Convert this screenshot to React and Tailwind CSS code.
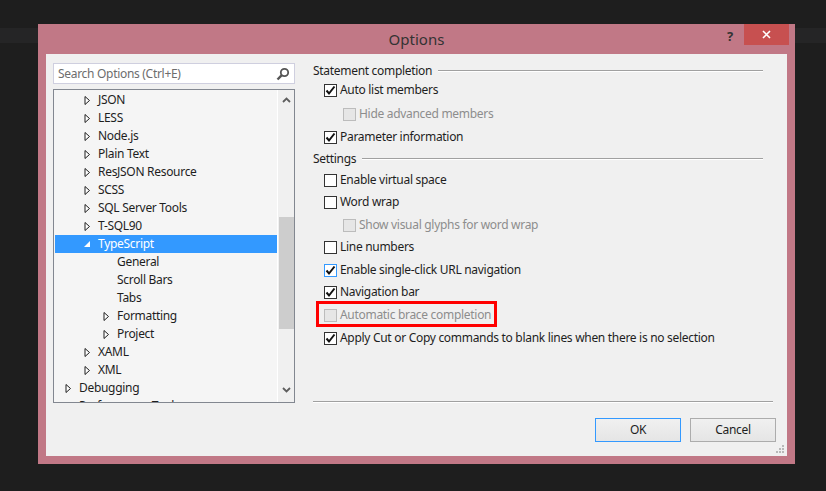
import React from "react";

const font = "font-['Noto_Sans',sans-serif] tracking-[-0.3px]";

const Arrow = ({ open, selected }) =>
  open ? (
    <svg width="7" height="8" viewBox="0 0 7 8" className="shrink-0">
      <path d="M6 1 L6 7 L0 7 Z" fill={selected ? "#ffffff" : "#1e1e1e"} />
    </svg>
  ) : (
    <svg width="7" height="9" viewBox="0 0 7 9" className="shrink-0">
      <path d="M1 0.5 L5.5 4.5 L1 8.5 Z" fill="#ffffff" stroke="#1e1e1e" strokeWidth="1" />
    </svg>
  );

const treeItems = [
  { label: "JSON", level: 1, arrow: "closed" },
  { label: "LESS", level: 1, arrow: "closed" },
  { label: "Node.js", level: 1, arrow: "closed" },
  { label: "Plain Text", level: 1, arrow: "closed" },
  { label: "ResJSON Resource", level: 1, arrow: "closed" },
  { label: "SCSS", level: 1, arrow: "closed" },
  { label: "SQL Server Tools", level: 1, arrow: "closed" },
  { label: "T-SQL90", level: 1, arrow: "closed" },
  { label: "TypeScript", level: 1, arrow: "open", selected: true },
  { label: "General", level: 2 },
  { label: "Scroll Bars", level: 2 },
  { label: "Tabs", level: 2 },
  { label: "Formatting", level: 2, arrow: "closed" },
  { label: "Project", level: 2, arrow: "closed" },
  { label: "XAML", level: 1, arrow: "closed" },
  { label: "XML", level: 1, arrow: "closed" },
  { label: "Debugging", level: 0, arrow: "closed" },
  { label: "Performance Tools", level: 0, arrow: "closed" },
];

const indent = ["pl-[10px]", "pl-[29px]", "pl-[48px]"];

const TreeRow = ({ item }) => (
  <div
    className={`h-[18px] shrink-0 flex items-center ${indent[item.level]} ${
      item.selected ? "bg-[#3399ff] text-white" : "text-[#1e1e1e]"
    }`}
  >
    <div className="w-[14px] flex items-center">
      {item.arrow && <Arrow open={item.arrow === "open"} selected={item.selected} />}
    </div>
    <span className="whitespace-nowrap">{item.label}</span>
  </div>
);

const Check = ({ checked, disabled, focused }) => (
  <div
    className={`w-[13px] h-[13px] shrink-0 border flex items-center justify-center ${
      disabled
        ? "bg-[#e6e6e6] border-[#bcbcbc]"
        : focused
        ? "bg-white border-[#3399ff]"
        : "bg-white border-[#333333]"
    }`}
  >
    {checked && (
      <svg width="11" height="11" viewBox="0 0 11 11">
        <path d="M1.5 5.5 L4 8.5 L9.5 1.5" fill="none" stroke="#111" strokeWidth="2" />
      </svg>
    )}
  </div>
);

const Option = ({ label, checked, disabled, focused, sub, mt = "" }) => (
  <div className={`h-[22px] flex items-center ${sub ? "pl-[30px]" : "pl-[11px]"} ${mt}`}>
    <Check checked={checked} disabled={disabled} focused={focused} />
    <span className={`ml-[3px] whitespace-nowrap ${disabled ? "text-[#8d8d8d]" : "text-[#1e1e1e]"}`}>
      {label}
    </span>
  </div>
);

const Group = ({ title, mt = "" }) => (
  <div className={`h-[16px] flex items-center pr-[10px] ${mt}`}>
    <span className="whitespace-nowrap text-[#1e1e1e]">{title}</span>
    <div className="flex-1 ml-[6px] h-[2px] border-t border-[#a0a0a0] border-b border-b-white" />
  </div>
);

export default function App() {
  return (
    <div className={`relative w-[826px] h-[491px] bg-[#1e1e1e] overflow-hidden ${font} text-[12px]`}>
      <div className="mt-[28px] h-[15px] bg-[#252526]" />

      {/* dialog window */}
      <div className="absolute left-[38px] top-[24px] w-[757px] h-[440px] bg-[#c17886] flex flex-col">
        <div className="h-[30px] flex items-center relative">
          <div className="flex-1 text-center text-[15px] text-[#333333] tracking-normal">Options</div>
          <span className="absolute left-[689px] top-[3px] text-[13px] font-bold text-[#333333]">?</span>
          <div className="absolute right-[6px] top-0 w-[45px] h-[21px] bg-[#c75050] flex items-center justify-center">
            <svg width="9" height="9" viewBox="0 0 9 9">
              <path d="M1 1 L8 8 M8 1 L1 8" stroke="#fff" strokeWidth="1.6" />
            </svg>
          </div>
        </div>

        <div className="mx-[8px] mb-[8px] flex-1 bg-[#f0f0f0] flex flex-col relative">
          <div className="flex pl-[7px] pt-[9px]">
            {/* left: search + tree */}
            <div className="w-[242px] flex flex-col">
              <div className="h-[21px] bg-white border border-[#cfcfdf] flex items-center px-[4px]">
                <span className="flex-1 text-[#6d6d6d]">Search Options (Ctrl+E)</span>
                <svg width="14" height="14" viewBox="0 0 14 14">
                  <circle cx="8.5" cy="5.5" r="3.7" fill="none" stroke="#555" strokeWidth="1.8" />
                  <path d="M5.8 8.2 L1.5 12.5" stroke="#555" strokeWidth="2.4" />
                </svg>
              </div>
              <div className="mt-[5px] h-[314px] border border-[#828790] bg-[#f5f5f5] flex overflow-hidden">
                <div className="flex-1 flex flex-col pt-[1px] pl-[1px] overflow-hidden">
                  {treeItems.map((item) => (
                    <TreeRow key={item.label} item={item} />
                  ))}
                </div>
                <div className="w-[17px] border-l border-white bg-[#f0f0f0] flex flex-col items-center">
                  <svg width="9" height="6" viewBox="0 0 9 6" className="mt-[7px]">
                    <path d="M1 5 L4.5 1.5 L8 5" fill="none" stroke="#5e5e5e" strokeWidth="1.8" />
                  </svg>
                  <div className="mt-[114px] w-[15px] h-[112px] bg-[#cdcdcd]" />
                  <svg width="9" height="6" viewBox="0 0 9 6" className="mt-[58px]">
                    <path d="M1 1 L4.5 4.5 L8 1" fill="none" stroke="#5e5e5e" strokeWidth="1.8" />
                  </svg>
                </div>
              </div>
            </div>

            {/* right: options */}
            <div className="ml-[18px] w-[460px] flex flex-col">
              <Group title="Statement completion" />
              <Option label="Auto list members" checked />
              <Option label="Hide advanced members" sub disabled mt="mt-[2px]" />
              <Option label="Parameter information" checked mt="mt-[1px]" />
              <Group title="Settings" mt="mt-[3px]" />
              <Option label="Enable virtual space" mt="mt-[2px]" />
              <Option label="Word wrap" />
              <Option label="Show visual glyphs for word wrap" sub disabled mt="mt-[1px]" />
              <Option label="Line numbers" />
              <Option label="Enable single-click URL navigation" checked focused mt="mt-[1px]" />
              <Option label="Navigation bar" checked />
              <div className="relative mt-[1px]">
                <Option label="Automatic brace completion" disabled />
                <div className="absolute left-[3px] top-[-3px] w-[181px] h-[26px] border-[3px] border-[#ff0000]" />
              </div>
              <Option label="Apply Cut or Copy commands to blank lines when there is no selection" checked mt="mt-[1px]" />
              <div className="mt-auto h-[2px] border-t border-[#a0a0a0] border-b border-b-white" />
            </div>
          </div>

          {/* buttons */}
          <div className="flex justify-end gap-[9px] pr-[11px] mt-[15px]">
            <button className="w-[86px] h-[24px] border border-[#3399ff] bg-gradient-to-b from-[#f0f0f0] to-[#e5e5e5] text-[#1e1e1e]">
              OK
            </button>
            <button className="w-[86px] h-[24px] border border-[#acacac] bg-gradient-to-b from-[#f0f0f0] to-[#e5e5e5] text-[#1e1e1e]">
              Cancel
            </button>
          </div>

          <svg width="9" height="9" viewBox="0 0 9 9" className="absolute right-[2px] bottom-[2px]">
            <rect x="6" y="0" width="2" height="2" fill="#b8b8b8" />
            <rect x="3" y="3" width="2" height="2" fill="#b8b8b8" />
            <rect x="6" y="3" width="2" height="2" fill="#b8b8b8" />
            <rect x="0" y="6" width="2" height="2" fill="#b8b8b8" />
            <rect x="3" y="6" width="2" height="2" fill="#b8b8b8" />
            <rect x="6" y="6" width="2" height="2" fill="#b8b8b8" />
          </svg>
        </div>
      </div>
    </div>
  );
}
